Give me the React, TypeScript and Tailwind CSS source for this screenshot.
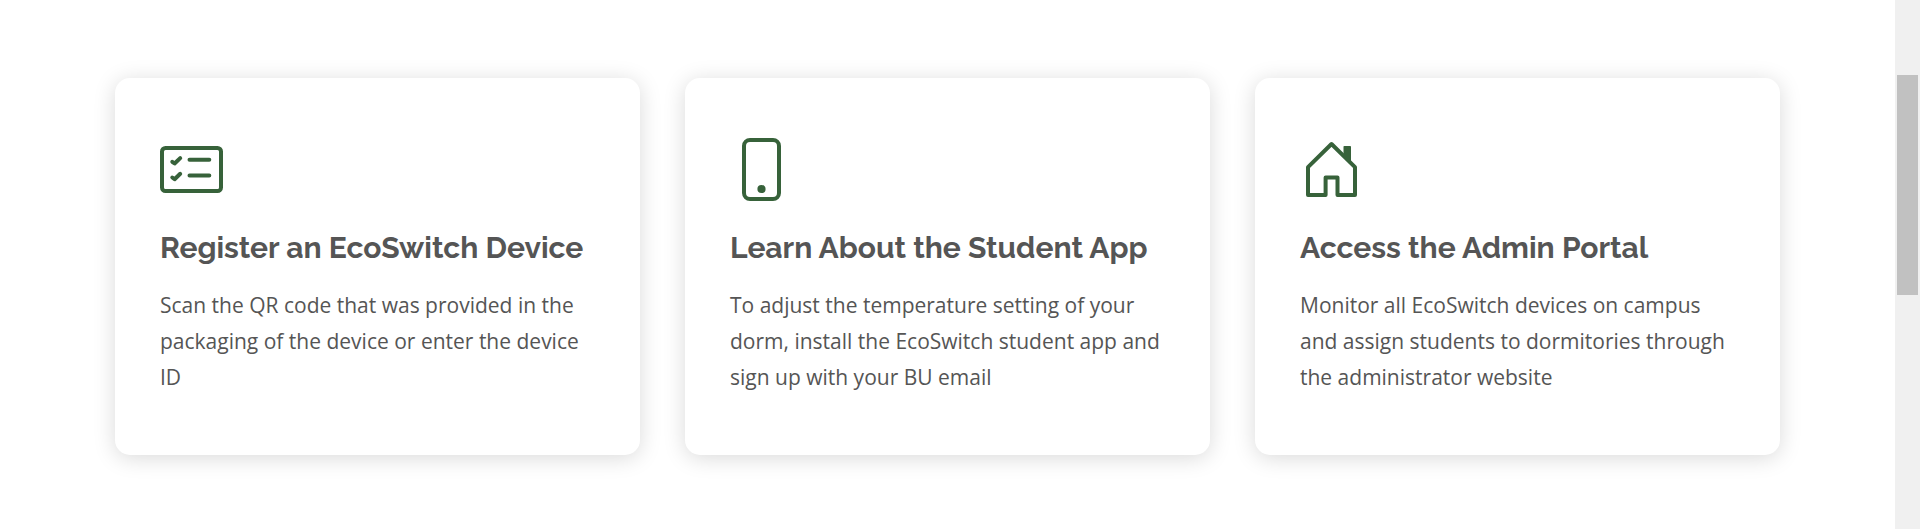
import React from "react";

function ChecklistIcon() {
  return (
    <svg viewBox="0 0 63 63" className="block size-[63px] text-[#37623a]" fill="none" stroke="currentColor" strokeLinecap="round" strokeLinejoin="round">
      <rect x="2" y="10" width="59" height="43" rx="3.5" strokeWidth="4" />
      <path d="M29.5 21.8H49.3M29.5 37.5H49.3" strokeWidth="4" />
      <path d="M12.3 23.8L14.6 25.5L20.2 20.1M12.3 39.5L14.6 41.2L20.2 35.8" strokeWidth="4" />
    </svg>
  );
}

function PhoneIcon() {
  return (
    <svg viewBox="0 0 63 63" className="block size-[63px] text-[#37623a]" fill="none" stroke="currentColor">
      <rect x="14" y="2" width="35" height="59" rx="6" strokeWidth="4" />
      <circle cx="31.5" cy="51" r="4.1" fill="currentColor" stroke="none" />
    </svg>
  );
}

function HouseIcon() {
  return (
    <svg viewBox="0 0 63 63" className="block size-[63px] text-[#37623a]" fill="none" stroke="currentColor" strokeLinejoin="round">
      <path d="M8 57V29.2L31.5 6L55 29.2V57H37.5V39.5H25.6V57Z" strokeWidth="4" />
      <path d="M44.3 8H50.2Q51 8 51 8.8V25L43.5 17.5V8.8Q43.5 8 44.3 8Z" fill="currentColor" stroke="none" />
    </svg>
  );
}

interface CardProps {
  icon: React.ReactNode;
  title: string;
  lines: string[];
}

function Card({ icon, title, lines }: CardProps) {
  return (
    <article className="h-[377px] w-[525px] rounded-[15px] bg-white px-[45px] pt-[60px] shadow-[0_3px_22px_rgba(0,0,0,0.15)]">
      {icon}
      <h3 className="mt-[29px] whitespace-nowrap font-[Raleway,Lato,sans-serif] text-[30px] font-bold leading-[36px] text-[#555555]">{title}</h3>
      <p className="mt-[21px] whitespace-nowrap font-['Open_Sans',sans-serif] text-[21px] leading-[36px] text-[#555555]">
        {lines.map((line) => (
          <span key={line} className="block">{line}</span>
        ))}
      </p>
    </article>
  );
}

export default function App() {
  return (
    <div className="flex h-[529px] w-full overflow-hidden bg-white">
      <main className="flex flex-1 gap-[45px] pl-[115px] pt-[78px]">
        <Card
          icon={<ChecklistIcon />}
          title="Register an EcoSwitch Device"
          lines={["Scan the QR code that was provided in the", "packaging of the device or enter the device", "ID"]}
        />
        <Card
          icon={<PhoneIcon />}
          title="Learn About the Student App"
          lines={["To adjust the temperature setting of your", "dorm, install the EcoSwitch student app and", "sign up with your BU email"]}
        />
        <Card
          icon={<HouseIcon />}
          title="Access the Admin Portal"
          lines={["Monitor all EcoSwitch devices on campus", "and assign students to dormitories through", "the administrator website"]}
        />
      </main>
      <div className="h-full w-[25px] bg-[#f0f0f0] px-[2px] pt-[75px]">
        <div className="h-[220px] bg-[#c1c1c1]" />
      </div>
    </div>
  );
}
